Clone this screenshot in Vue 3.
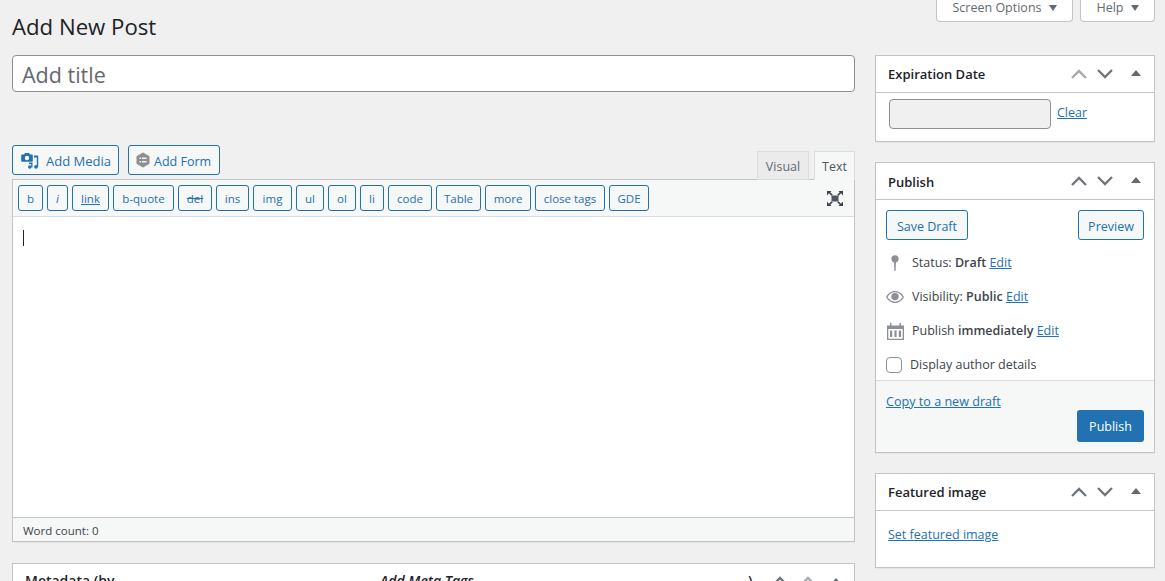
<script setup>
const quicktags = [
  { label: 'b', w: 25 }, { label: 'i', w: 21, cls: 'it' }, { label: 'link', w: 37, cls: 'un' }, { label: 'b-quote', w: 61 },
  { label: 'del', w: 34, cls: 'st' }, { label: 'ins', w: 33 }, { label: 'img', w: 39 }, { label: 'ul', w: 28 }, { label: 'ol', w: 28 },
  { label: 'li', w: 24 }, { label: 'code', w: 44 }, { label: 'Table', w: 45 }, { label: 'more', w: 46 }, { label: 'close tags', w: 70 }, { label: 'GDE', w: 40 }
]
</script>

<template>
  <div class="page">
    <div class="screen-tabs">
      <div class="stab so">Screen Options <span class="caret"></span></div>
      <div class="stab help">Help <span class="caret"></span></div>
    </div>
    <div class="columns">
      <main class="main">
        <h1>Add New Post</h1>
        <div class="title-input">Add title</div>
        <div class="editor-tools">
          <div class="media-btns">
            <div class="btn media">
              <svg width="18" height="16" viewBox="0 0 18 16"><path fill="#2271b1" d="M3 1.500L4 0h4l1 1.500h2a.8.800 0 0 1 .8.800V8a.8.800 0 0 1-.8.800H1A.8.800 0 0 1 .200 8V2.300A.8.800 0 0 1 1 1.500z"/><circle cx="6" cy="5" r="2.200" fill="#f6f7f7"/><path fill="#2271b1" d="M8 9.500h3.500v5l-1.300-.2V11L8 11.300z"/><circle cx="8.800" cy="14" r="1.800" fill="#2271b1"/><path fill="#2271b1" d="M13 2.500h4.200v11.200h-1.400V4.500H13z"/><circle cx="15" cy="13.800" r="1.900" fill="#2271b1"/></svg>
              <span>Add Media</span>
            </div>
            <div class="btn form">
              <svg width="16" height="16" viewBox="0 0 16 16"><path fill="#8c8f94" d="M8 .5l6.500 3.700v7.600L8 15.500l-6.500-3.700V4.200z"/><path fill="#f6f7f7" d="M4.500 5.500h1.500V7H4.500zM7 5.500h4.500V7H7zM4.500 9h1.500v1.500H4.500zM7 9h4.500v1.500H7z"/></svg>
              <span>Add Form</span>
            </div>
          </div>
          <div class="tabs">
            <div class="tab">Visual</div>
            <div class="tab active">Text</div>
          </div>
        </div>
        <div class="editor">
          <div class="toolbar">
            <div class="qt-list">
              <span v-for="q in quicktags" :key="q.label" class="qt" :class="q.cls" :style="{ width: q.w + 'px' }">{{ q.label }}</span>
            </div>
            <svg class="fs" width="16" height="15" viewBox="0 0 16 15"><path fill="#50575e" d="M4.500 4.500h7v6h-7z"/><path fill="#3c434a" d="M0 0h4.500L3.300 1.200l2.500 2.500-1.300 1L2 2.200 0 4.500zM16 0v4.500l-2-2.300-2.500 2.500-1.300-1 2.500-2.500L11.500 0zM0 15v-4.500l2 2.300 2.500-2.500 1.300 1-2.500 2.500L4.500 15zM16 15h-4.500l1.200-1.200-2.500-2.500 1.300-1 2.500 2.500 2-2.300z"/></svg>
          </div>
          <div class="textarea"><span class="cursor"></span></div>
          <div class="status">Word count: 0</div>
        </div>
        <div class="metabox-bottom">
          <span class="mt1">Metadata (by</span>
          <span class="mt2">Add Meta Tags</span>
          <span class="mt3">)</span>
          <div class="handles small">
            <svg width="20" height="20" viewBox="0 0 20 20"><path class="chev" d="M3 14l7-7 7 7"/></svg>
            <svg width="20" height="20" viewBox="0 0 20 20"><path class="chev lt" d="M3 14l7-7 7 7"/></svg>
            <span class="tri"></span>
          </div>
        </div>
      </main>
      <aside class="side">
        <section class="box">
          <header class="box-h">
            <h2>Expiration Date</h2>
            <div class="handles">
              <svg width="20" height="20" viewBox="0 0 20 20"><path class="chev lt" d="M3 14l7-7 7 7"/></svg>
              <svg width="20" height="20" viewBox="0 0 20 20"><path class="chev" d="M3 6l7 7 7-7"/></svg>
              <span class="tri"></span>
            </div>
          </header>
          <div class="exp-body">
            <div class="date-input"></div>
            <a class="link">Clear</a>
          </div>
        </section>

        <section class="box">
          <header class="box-h">
            <h2 class="nudge">Publish</h2>
            <div class="handles">
              <svg width="20" height="20" viewBox="0 0 20 20"><path class="chev" d="M3 14l7-7 7 7"/></svg>
              <svg width="20" height="20" viewBox="0 0 20 20"><path class="chev" d="M3 6l7 7 7-7"/></svg>
              <span class="tri"></span>
            </div>
          </header>
          <div class="pub-body">
            <div class="pub-btns">
              <div class="btn sbtn save">Save Draft</div>
              <div class="btn sbtn preview">Preview</div>
            </div>
            <div class="row">
              <span class="ico"><svg width="10" height="16" viewBox="0 0 10 16"><circle cx="5" cy="3.800" r="3.600" fill="#8c8f94"/><path fill="#8c8f94" d="M4 6h2l-.4 10h-1.200z"/></svg></span>
              <span>Status: <b>Draft</b> <a class="link">Edit</a></span>
            </div>
            <div class="row">
              <span class="ico"><svg width="18" height="12" viewBox="0 0 18 12"><path fill="#8c8f94" d="M9 0c4 0 7 2.500 9 6-2 3.500-5 6-9 6S2 9.500 0 6c2-3.500 5-6 9-6zm0 1.300C5.800 1.300 3.300 3.200 1.500 6c1.800 2.800 4.300 4.700 7.500 4.700s5.700-1.900 7.500-4.700C14.700 3.200 12.200 1.300 9 1.300z"/><circle cx="9" cy="5.600" r="3.700" fill="#8c8f94"/></svg></span>
              <span>Visibility: <b>Public</b> <a class="link">Edit</a></span>
            </div>
            <div class="row">
              <span class="ico"><svg width="17" height="17" viewBox="0 0 17 17"><path fill="#8c8f94" d="M0 2.500h3V0h1.500v2.500h8V0H14v2.500h3V17H0zM1.300 6v9.700h14.400V6z"/><path fill="#8c8f94" d="M3 7.500h2.200v6.500H3zM7.400 7.500h2.200v6.500H7.400zM11.800 7.500H14v6.500h-2.200z"/></svg></span>
              <span>Publish <b>immediately</b> <a class="link">Edit</a></span>
            </div>
            <label class="check"><span class="cb"></span><span>Display author details</span></label>
          </div>
          <div class="pub-foot">
            <a class="link copy">Copy to a new draft</a>
            <div class="primary">Publish</div>
          </div>
        </section>

        <section class="box">
          <header class="box-h">
            <h2>Featured image</h2>
            <div class="handles">
              <svg width="20" height="20" viewBox="0 0 20 20"><path class="chev" d="M3 14l7-7 7 7"/></svg>
              <svg width="20" height="20" viewBox="0 0 20 20"><path class="chev" d="M3 6l7 7 7-7"/></svg>
              <span class="tri"></span>
            </div>
          </header>
          <div class="feat-body"><a class="link">Set featured image</a></div>
        </section>
      </aside>
    </div>
  </div>
</template>

<style>
html, body { margin: 0; background: #f0f0f1; overflow: hidden; }
</style>

<style scoped>
.page {
  position: relative;
  width: 1165px;
  height: 581px;
  overflow: hidden;
  background: #f0f0f1;
  color: #3c434a;
  font: 12.5px/18px "Open Sans", "Noto Sans", sans-serif;
  box-sizing: border-box;
}
.screen-tabs { position: absolute; top: 0; right: 10px; display: flex; gap: 7px; }
.stab {
  height: 22px;
  box-sizing: border-box;
  background: #fff;
  border: 1px solid #c3c4c7;
  border-top: 0;
  border-radius: 0 0 4px 4px;
  color: #646970;
  display: flex;
  align-items: center;
  justify-content: center;
  gap: 7px;
  padding-bottom: 5px;
}
.so { width: 137px; }
.help { width: 75px; }
.caret { width: 0; height: 0; border: 4.500px solid transparent; border-top: 6px solid #646970; border-bottom: 0; }
.columns { display: flex; padding: 0 10px 0 12px; gap: 20px; }
.main { width: 843px; flex: none; }
.side { width: 280px; flex: none; padding-top: 55px; display: flex; flex-direction: column; gap: 20px; }
h1 { margin: 0; padding-top: 11px; height: 55px; box-sizing: border-box; font-size: 22.200px; line-height: 32px; font-weight: 400; color: #1d2327; }
.title-input {
  height: 37px;
  box-sizing: border-box;
  background: #fff;
  border: 1px solid #8c8f94;
  border-radius: 4px;
  padding-left: 9px;
  font-size: 21.500px;
  line-height: 38px;
  color: #646970;
}
.editor-tools { margin-top: 53px; height: 34px; display: flex; justify-content: space-between; align-items: flex-end; }
.media-btns { display: flex; gap: 9px; align-self: flex-start; }
.btn {
  box-sizing: border-box;
  border: 1px solid #2271b1;
  border-radius: 3px;
  background: #f6f7f7;
  color: #2271b1;
  display: flex;
  align-items: center;
}
.media, .form { height: 30px; padding-top: 2px; }
.media { width: 107px; padding-left: 8px; gap: 7px; font-size: 13px; }
.media svg { margin-top: -1px; }
.form { width: 92px; padding-left: 6px; gap: 3px; padding-top: 3px; }
.form svg { margin-top: -3px; }
.tabs { display: flex; gap: 5px; margin-bottom: -1px; position: relative; }
.tab {
  box-sizing: border-box;
  height: 29px;
  border: 1px solid #dcdcde;
  background: #ebebec;
  color: #646970;
  line-height: 30px;
  text-align: center;
  width: 52px;
}
.tab.active { width: 41px; background: #f6f7f7; border-bottom-color: #f6f7f7; color: #50575e; }
.editor { border: 1px solid #c3c4c7; height: 363px; box-sizing: border-box; display: flex; flex-direction: column; background: #fff; box-shadow: 0 1px 1px rgba(0,0,0,.04); }
.toolbar {
  height: 37px;
  flex: none;
  box-sizing: border-box;
  background: #f6f7f7;
  border-bottom: 1px solid #dcdcde;
  display: flex;
  align-items: center;
  justify-content: space-between;
  padding: 0 11px 0 5px;
}
.qt-list { display: flex; gap: 4px; }
.qt {
  box-sizing: border-box;
  height: 26px;
  border: 1px solid #2271b1;
  border-radius: 3px;
  color: #2271b1;
  font-size: 11.500px;
  line-height: 25px;
  text-align: center;
  white-space: nowrap;
}
.it { font-style: italic; }
.un { text-decoration: underline; }
.st { text-decoration: line-through; }
.textarea { flex: 1; padding: 13px 10px; }
.cursor { display: block; width: 1px; height: 16px; background: #1d2327; }
.status { height: 24px; flex: none; box-sizing: border-box; background: #f6f7f7; border-top: 1px solid #c3c4c7; padding-left: 10px; font-size: 11.500px; line-height: 25px; color: #3c434a; }
.metabox-bottom { position: relative; margin-top: 21px; height: 60px; background: #fff; border: 1px solid #c3c4c7; box-sizing: border-box; font-weight: 600; color: #1d2327; font-size: 14px; }
.mt1, .mt2, .mt3 { position: absolute; top: 8px; }
.mt1 { left: 12px; }
.mt2 { left: 367px; font-style: italic; }
.mt3 { left: 735px; }
.handles { display: flex; align-items: center; gap: 6px; }
.handles.small { position: absolute; right: 13px; top: 7px; gap: 8px; }
.handles.small .tri { margin-left: 5px; margin-top: 0; }
.chev { fill: none; stroke: #70757b; stroke-width: 2.300; }
.chev.lt { stroke: #a7aaad; }
.tri { width: 0; height: 0; margin-left: 10px; border: 5px solid transparent; border-bottom: 6px solid #646970; border-top: 0; margin-top: -3px; }
.box { background: #fff; border: 1px solid #c3c4c7; box-sizing: border-box; box-shadow: 0 1px 1px rgba(0,0,0,.04); }
.box-h { height: 37px; box-sizing: border-box; border-bottom: 1px solid #c3c4c7; display: flex; justify-content: space-between; align-items: center; padding: 0 13px 0 12px; }
h2 { margin: 0; font-size: 13px; line-height: 18px; font-weight: 600; color: #1d2327; }
h2.nudge { padding-top: 1px; }
.exp-body { height: 48px; box-sizing: border-box; display: flex; padding: 6px 0 0 13px; gap: 6px; }
.date-input { width: 162px; height: 30px; box-sizing: border-box; border: 1px solid #8c8f94; border-radius: 4px; background: #f0f0f1; }
.link { color: #2271b1; text-decoration: underline; }
.exp-body .link { line-height: 28px; }
.pub-body { padding: 10px 10px 0; height: 180px; box-sizing: border-box; }
.pub-btns { display: flex; justify-content: space-between; margin-bottom: 6px; }
.sbtn { height: 30px; justify-content: center; padding-top: 3px; }
.save { width: 82px; }
.preview { width: 66px; }
.row { display: flex; align-items: center; height: 34px; gap: 8px; }
.ico { width: 18px; display: flex; justify-content: center; flex: none; }
b { font-weight: 600; color: #3c434a; }
.check { display: flex; align-items: center; gap: 8px; height: 34px; }
.cb { width: 16px; height: 16px; box-sizing: border-box; background: #fff; border: 1px solid #8c8f94; border-radius: 4px; }
.pub-foot { background: #f6f7f7; border-top: 1px solid #dcdcde; height: 72px; box-sizing: border-box; padding: 12px 10px 0; display: flex; flex-direction: column; }
.copy { align-self: flex-start; font-size: 12.600px; }
.primary { align-self: flex-end; margin-top: -1px; width: 67px; height: 32px; background: #2271b1; color: #fff; border-radius: 3px; text-align: center; line-height: 33px; }
.feat-body { height: 56px; box-sizing: border-box; padding: 15px 12px 0; }
</style>
